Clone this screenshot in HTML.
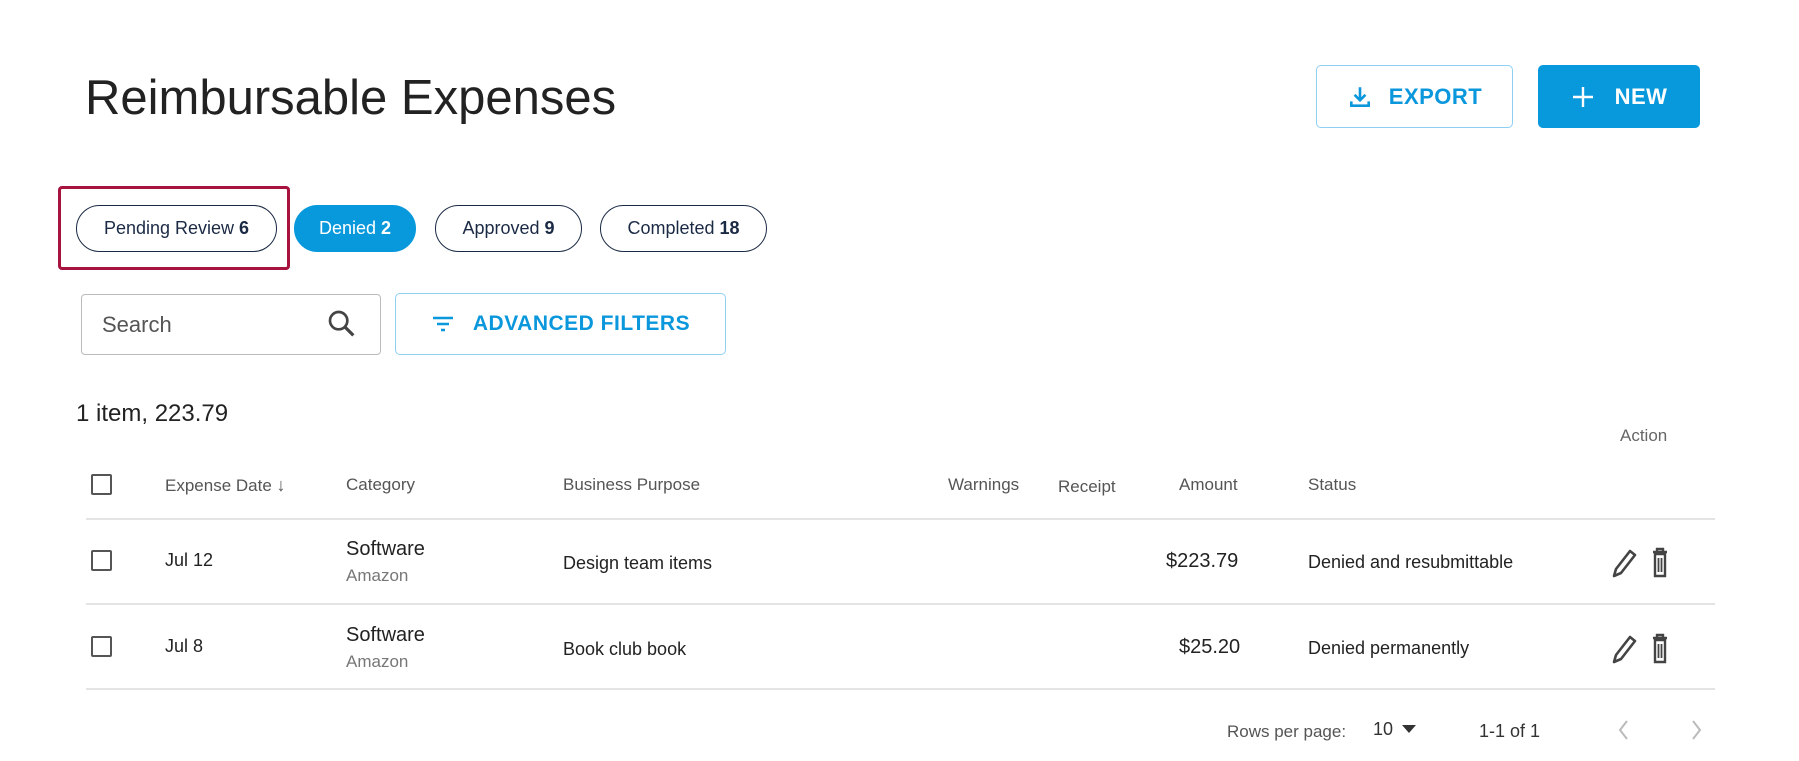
<!DOCTYPE html>
<html><head><meta charset="utf-8"><style>
*{box-sizing:border-box;margin:0;padding:0}
body{width:1799px;height:761px;background:#fff;font-family:"Liberation Sans",sans-serif;color:#212121;position:relative;overflow:hidden}
.a{position:absolute;white-space:nowrap}
h1{position:absolute;left:85px;top:70px;font-size:49px;font-weight:400;color:#222}
.btn{position:absolute;border-radius:5px;display:flex;align-items:center;justify-content:center;font-weight:700;font-size:22px;letter-spacing:.5px}
.chip{position:absolute;top:205px;height:47px;border:1.5px solid #1b2a44;border-radius:24px;display:flex;align-items:center;justify-content:center;font-size:18px;color:#1b2a44}
.hd{position:absolute;top:475px;font-size:17px;color:#555}
.cb{position:absolute;left:91px;width:21px;height:21px;border:2px solid #555;border-radius:2px}
.line{position:absolute;left:86px;width:1629px;height:2px;background:#e4e4e4}
.c{position:absolute;font-size:18px;color:#222}
</style></head><body>
<h1>Reimbursable Expenses</h1>
<div class="btn" style="left:1316px;top:65px;width:197px;height:63px;border:1.5px solid #8fd0f2;color:#0a97dc">
<svg width="26" height="26" viewBox="0 0 24 24" style="margin-right:16px"><path d="M12 3v11M7 10l5 5 5-5M4 16v4h16v-4" fill="none" stroke="#0a97dc" stroke-width="2.4"/></svg>EXPORT</div>
<div class="btn" style="left:1538px;top:65px;width:162px;height:63px;background:#0898dc;color:#fff">
<svg width="24" height="24" viewBox="0 0 24 24" style="margin-right:20px"><path d="M12 2v20M2 12h20" stroke="#fff" stroke-width="2.4"/></svg>NEW</div>
<div class="a" style="left:58px;top:186px;width:232px;height:84px;border:3px solid #a8123e;border-radius:4px"></div>
<div class="chip" style="left:76px;width:201px">Pending Review&nbsp;<b>6</b></div>
<div class="chip" style="left:294px;width:122px;background:#0898dc;border-color:#0898dc;color:#fff">Denied&nbsp;<b>2</b></div>
<div class="chip" style="left:435px;width:147px">Approved&nbsp;<b>9</b></div>
<div class="chip" style="left:600px;width:167px">Completed&nbsp;<b>18</b></div>
<div class="a" style="left:81px;top:294px;width:300px;height:61px;border:1.5px solid #bbb;border-radius:4px"></div>
<div class="a" style="left:102px;top:312px;font-size:22px;color:#555">Search</div>
<svg class="a" style="left:326px;top:308px" width="32" height="32" viewBox="0 0 24 24"><circle cx="9.5" cy="9.5" r="6.5" fill="none" stroke="#444" stroke-width="2"/><path d="M14.5 14.5l6 6" stroke="#444" stroke-width="2.4"/></svg>
<div class="btn" style="left:395px;top:293px;width:331px;height:62px;border:1.5px solid #8fd0f2;color:#0a97dc;font-size:21px">
<svg width="24" height="20" viewBox="0 0 24 20" style="margin-right:18px"><path d="M2 4h20M6 10h12M10 16h4" stroke="#0a97dc" stroke-width="2.4"/></svg>ADVANCED FILTERS</div>
<div class="a" style="left:76px;top:400px;font-size:24px;color:#222">1 item, 223.79</div>
<div class="a" style="left:1620px;top:426px;font-size:17px;color:#666">Action</div>
<div class="cb" style="top:474px"></div>
<div class="hd" style="left:165px">Expense Date <span style="font-size:18px">↓</span></div>
<div class="hd" style="left:346px">Category</div>
<div class="hd" style="left:563px">Business Purpose</div>
<div class="hd" style="left:948px">Warnings</div>
<div class="hd" style="left:1058px;top:477px">Receipt</div>
<div class="hd" style="left:1179px">Amount</div>
<div class="hd" style="left:1308px">Status</div>
<div class="line" style="top:518px"></div>
<div class="cb" style="top:550px"></div>
<div class="c" style="left:165px;top:550px">Jul 12</div>
<div class="c" style="left:346px;top:538px;font-size:20px">Software</div>
<div class="c" style="left:346px;top:566px;font-size:17px;color:#777">Amazon</div>
<div class="c" style="left:563px;top:553px">Design team items</div>
<div class="c" style="left:1166px;top:550px;font-size:20px">$223.79</div>
<div class="c" style="left:1308px;top:552px">Denied and resubmittable</div>
<div class="line" style="top:603px"></div>
<div class="cb" style="top:636px"></div>
<div class="c" style="left:165px;top:636px">Jul 8</div>
<div class="c" style="left:346px;top:624px;font-size:20px">Software</div>
<div class="c" style="left:346px;top:652px;font-size:17px;color:#777">Amazon</div>
<div class="c" style="left:563px;top:639px">Book club book</div>
<div class="c" style="left:1179px;top:636px;font-size:20px">$25.20</div>
<div class="c" style="left:1308px;top:638px">Denied permanently</div>
<div class="line" style="top:688px"></div>
<svg class="a" style="left:1610px;top:547px" width="60" height="32" viewBox="0 0 60 32"><path d="M4 29l2-7L20 4l5 4L11 26z" fill="none" stroke="#444" stroke-width="2.6" stroke-linejoin="round"/><path d="M43 5h14M47 5V2h6v3M45 7h10v22H45z" fill="none" stroke="#444" stroke-width="2.4"/><path d="M48.5 11v14M51.5 11v14" stroke="#444" stroke-width="1.8"/></svg>
<svg class="a" style="left:1610px;top:633px" width="60" height="32" viewBox="0 0 60 32"><path d="M4 29l2-7L20 4l5 4L11 26z" fill="none" stroke="#444" stroke-width="2.6" stroke-linejoin="round"/><path d="M43 5h14M47 5V2h6v3M45 7h10v22H45z" fill="none" stroke="#444" stroke-width="2.4"/><path d="M48.5 11v14M51.5 11v14" stroke="#444" stroke-width="1.8"/></svg>
<div class="a" style="left:1227px;top:722px;font-size:17px;color:#555">Rows per page:</div>
<div class="a" style="left:1373px;top:719px;font-size:18px;color:#333">10</div>
<svg class="a" style="left:1402px;top:724px" width="14" height="10"><path d="M0 1h14L7 9z" fill="#333"/></svg>
<div class="a" style="left:1479px;top:721px;font-size:18px;color:#333">1-1 of 1</div>
<svg class="a" style="left:1616px;top:718px" width="16" height="24"><path d="M11 3L4 12l7 9" fill="none" stroke="#bbb" stroke-width="2"/></svg>
<svg class="a" style="left:1688px;top:718px" width="16" height="24"><path d="M5 3l7 9-7 9" fill="none" stroke="#bbb" stroke-width="2"/></svg>
</body></html>
